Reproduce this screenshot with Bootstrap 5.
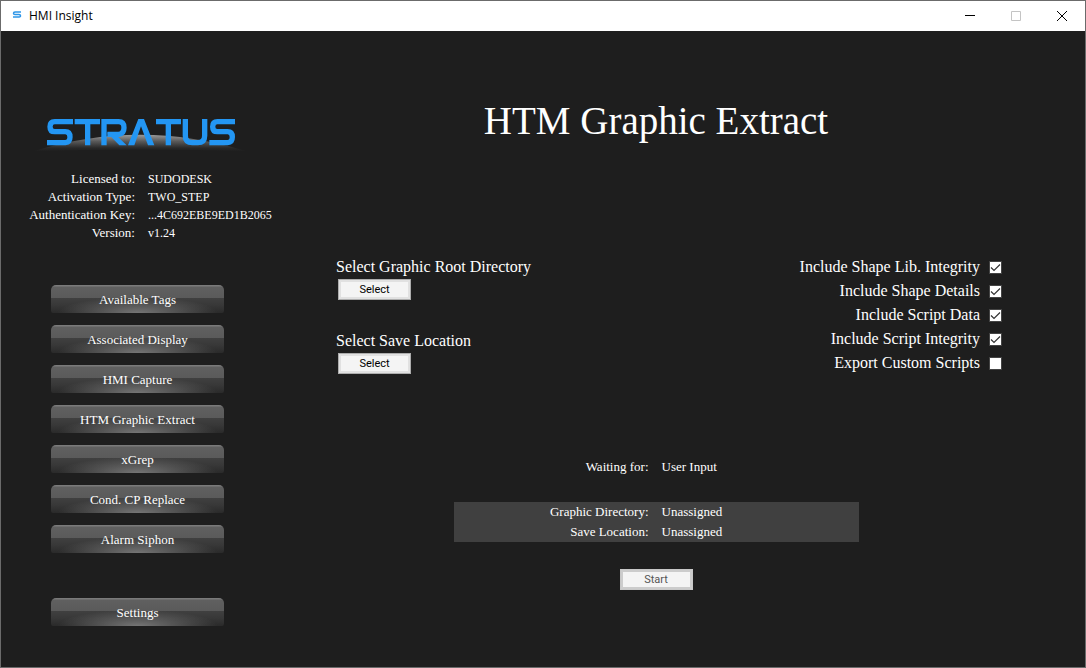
<!DOCTYPE html>
<html lang="en">
<head>
<meta charset="utf-8">
<meta name="viewport" content="width=device-width, initial-scale=1">
<title>HMI Insight</title>
<link href="https://cdn.jsdelivr.net/npm/bootstrap@5.3.0/dist/css/bootstrap.min.css" rel="stylesheet">
<style>
  body { background: #1e1e1e; color: #fff; font-family: "Liberation Serif", serif; font-size: 13px; line-height: 18px; }
  .app-window { border: 1px solid #6b6b6b; }
  .title-bar { height: 30px; background: #fff; color: #000; font: 12px/30px "Open Sans", sans-serif; }
  .win-btn { width: 46px; height: 30px; background: none; border: 0; padding: 0; display: flex; align-items: center; justify-content: center; }
  .side-panel { width: 289px; flex: none; padding-top: 74px; }
  .logo-art { display: block; margin-left: 29px; }
  .license { display: grid; grid-template-columns: 134px 1fr; column-gap: 13px; margin: 10px 0 0; }
  .license dt, .status-list dt { font-weight: 400; text-align: right; white-space: nowrap; }
  .license dd, .status-list dd { margin: 0; }
  .license dd { font-size: 12px; }
  .side-menu { width: 173px; margin: 43px 0 0 50px; gap: 12px; }
  .glossy { height: 28px; border: 0; border-radius: 5px 5px 2px 2px; padding: 2px 0 0; color: #fff;
    background:
      linear-gradient(#7a7a7a 0 1px, #606060 2px, #5a5a5a 13px, transparent 13px),
      radial-gradient(ellipse 80px 16px at 50% 100%, #767676, rgba(80,80,80,0)),
      linear-gradient(#404040 13px, #383838 20px, #2a2a2a); }
  .settings-btn { margin-top: 33px; }
  .main-panel { flex: 1; padding-top: 68px; margin-right: 63px; }
  .page-title { font-size: 39px; line-height: 44px; margin: 0; font-weight: 400; }
  .options { margin-top: 112px; padding: 0 20px 0 46px; font-size: 16px; line-height: 24px; }
  .check-row { display: flex; align-items: center; gap: 9px; }
  .win-button { width: 73px; height: 21px; padding: 0; background: #f4f4f4; border: 1px solid #adadad; box-shadow: inset 0 0 0 2px #e1e1e1; color: #000; font: 11px/17px Roboto, sans-serif; display: block; }
  .win-button:disabled { border-color: #c8c8c8; box-shadow: inset 0 0 0 2px #ccc; color: #555; }
  .pick .win-button { margin-left: 2px; }
  .pick + .pick { margin-top: 29px; }
  .tick { appearance: none; width: 13px; height: 13px; margin: 0; background: #fff; border: 1px solid #444; }
  .tick:checked { background: #fff url("data:image/svg+xml,%3Csvg xmlns='http://www.w3.org/2000/svg' viewBox='0 0 11 11'%3E%3Cpath d='M1 5.5l3 3L10 2.5' fill='none' stroke='%23333' stroke-width='1.2'/%3E%3C/svg%3E"); }
  .status-list { width: 405px; margin: 0 auto; display: grid; grid-template-columns: 195px 1fr; column-gap: 13px; line-height: 20px; }
  .waiting { margin-top: 82px; }
  .paths { background: #404040; margin-top: 25px; }
  .start-btn { margin: 27px auto 0; }
</style>
</head>
<body>
<div class="app-window min-vh-100">
  <header class="title-bar d-flex align-items-center">
    <svg class="ms-2" width="16" height="16" viewBox="0 0 16 16" aria-hidden="true"><path d="M12 4H6Q4.500 4 4.500 5.200T6 6.500H10Q11.500 6.500 11.500 7.800T10 9H4" fill="none" stroke="#2e96e8" stroke-width="1.500"/></svg>
    <span class="flex-grow-1 ps-1">HMI Insight</span>
    <button class="win-btn" type="button" aria-label="Minimize"><svg width="10" height="10"><path d="M0 4.500H10" stroke="#000"/></svg></button>
    <button class="win-btn" type="button" aria-label="Maximize" disabled><svg width="10" height="10"><path d="M.5.5h9v9h-9z" fill="none" stroke="#c4c4c4"/></svg></button>
    <button class="win-btn" type="button" aria-label="Close"><svg width="10" height="10"><path d="M0 0L10 10M10 0L0 10" stroke="#000"/></svg></button>
  </header>
  <div class="d-flex">
    <aside class="side-panel">
      <svg class="logo-art" width="220" height="55" viewBox="0 0 660 165" role="img" aria-label="Stratus">
        <defs>
          <linearGradient id="arc" x1="0" y1="0" x2="0" y2="1"><stop offset="0" stop-color="#9a9a9a"/><stop offset=".4" stop-color="#585858"/><stop offset=".8" stop-color="#282828"/><stop offset="1" stop-color="#1e1e1e"/></linearGradient>
        </defs>
        <path d="M10 139Q330 40 650 139Q330 128 10 139Z" fill="url(#arc)"/>
        <g fill="none" stroke="#2396f3" stroke-width="16">
          <path d="M129 50H74Q60 50 60 65T74 80H106Q120 80 120 96T106 113H51"/>
          <path d="M134 50H210M173 50V121M222 121V50H266Q282 50 282 68T266 88H232"/>
          <path d="M378 50H453M415 50V121M466 42V92Q466 113 487 113H503Q524 113 524 92V42"/>
          <path d="M615 50H562Q548 50 548 65T562 80H593Q607 80 607 96T593 113H538"/>
        </g>
        <path d="M232 84L252 84L290 121H268ZM294 121L325 42H342L373 121H354L333 64L313 121Z" fill="#2396f3"/>
      </svg>
      <dl class="license">
        <dt>Licensed to:</dt><dd>SUDODESK</dd>
        <dt>Activation Type:</dt><dd>TWO_STEP</dd>
        <dt>Authentication Key:</dt><dd>...4C692EBE9ED1B2065</dd>
        <dt>Version:</dt><dd>v1.24</dd>
      </dl>
      <nav class="side-menu d-flex flex-column">
        <button class="glossy" type="button">Available Tags</button>
        <button class="glossy" type="button">Associated Display</button>
        <button class="glossy" type="button">HMI Capture</button>
        <button class="glossy" type="button">HTM Graphic Extract</button>
        <button class="glossy" type="button">xGrep</button>
        <button class="glossy" type="button">Cond. CP Replace</button>
        <button class="glossy" type="button">Alarm Siphon</button>
        <button class="glossy settings-btn" type="button">Settings</button>
      </nav>
    </aside>
    <main class="main-panel">
      <h1 class="page-title text-center">HTM Graphic Extract</h1>
      <div class="options d-flex justify-content-between">
        <div>
          <div class="pick"><label for="root">Select Graphic Root Directory</label><button class="win-button" id="root" type="button">Select</button></div>
          <div class="pick"><label for="save">Select Save Location</label><button class="win-button" id="save" type="button">Select</button></div>
        </div>
        <div class="d-flex flex-column align-items-end">
          <label class="check-row">Include Shape Lib. Integrity<input class="tick" type="checkbox" checked></label>
          <label class="check-row">Include Shape Details<input class="tick" type="checkbox" checked></label>
          <label class="check-row">Include Script Data<input class="tick" type="checkbox" checked></label>
          <label class="check-row">Include Script Integrity<input class="tick" type="checkbox" checked></label>
          <label class="check-row">Export Custom Scripts<input class="tick" type="checkbox"></label>
        </div>
      </div>
      <dl class="status-list waiting"><dt>Waiting for:</dt><dd>User Input</dd></dl>
      <dl class="status-list paths">
        <dt>Graphic Directory:</dt><dd>Unassigned</dd>
        <dt>Save Location:</dt><dd>Unassigned</dd>
      </dl>
      <button class="win-button start-btn" type="button" disabled>Start</button>
    </main>
  </div>
</div>
<script src="https://cdn.jsdelivr.net/npm/bootstrap@5.3.0/dist/js/bootstrap.bundle.min.js"></script>
</body>
</html>
